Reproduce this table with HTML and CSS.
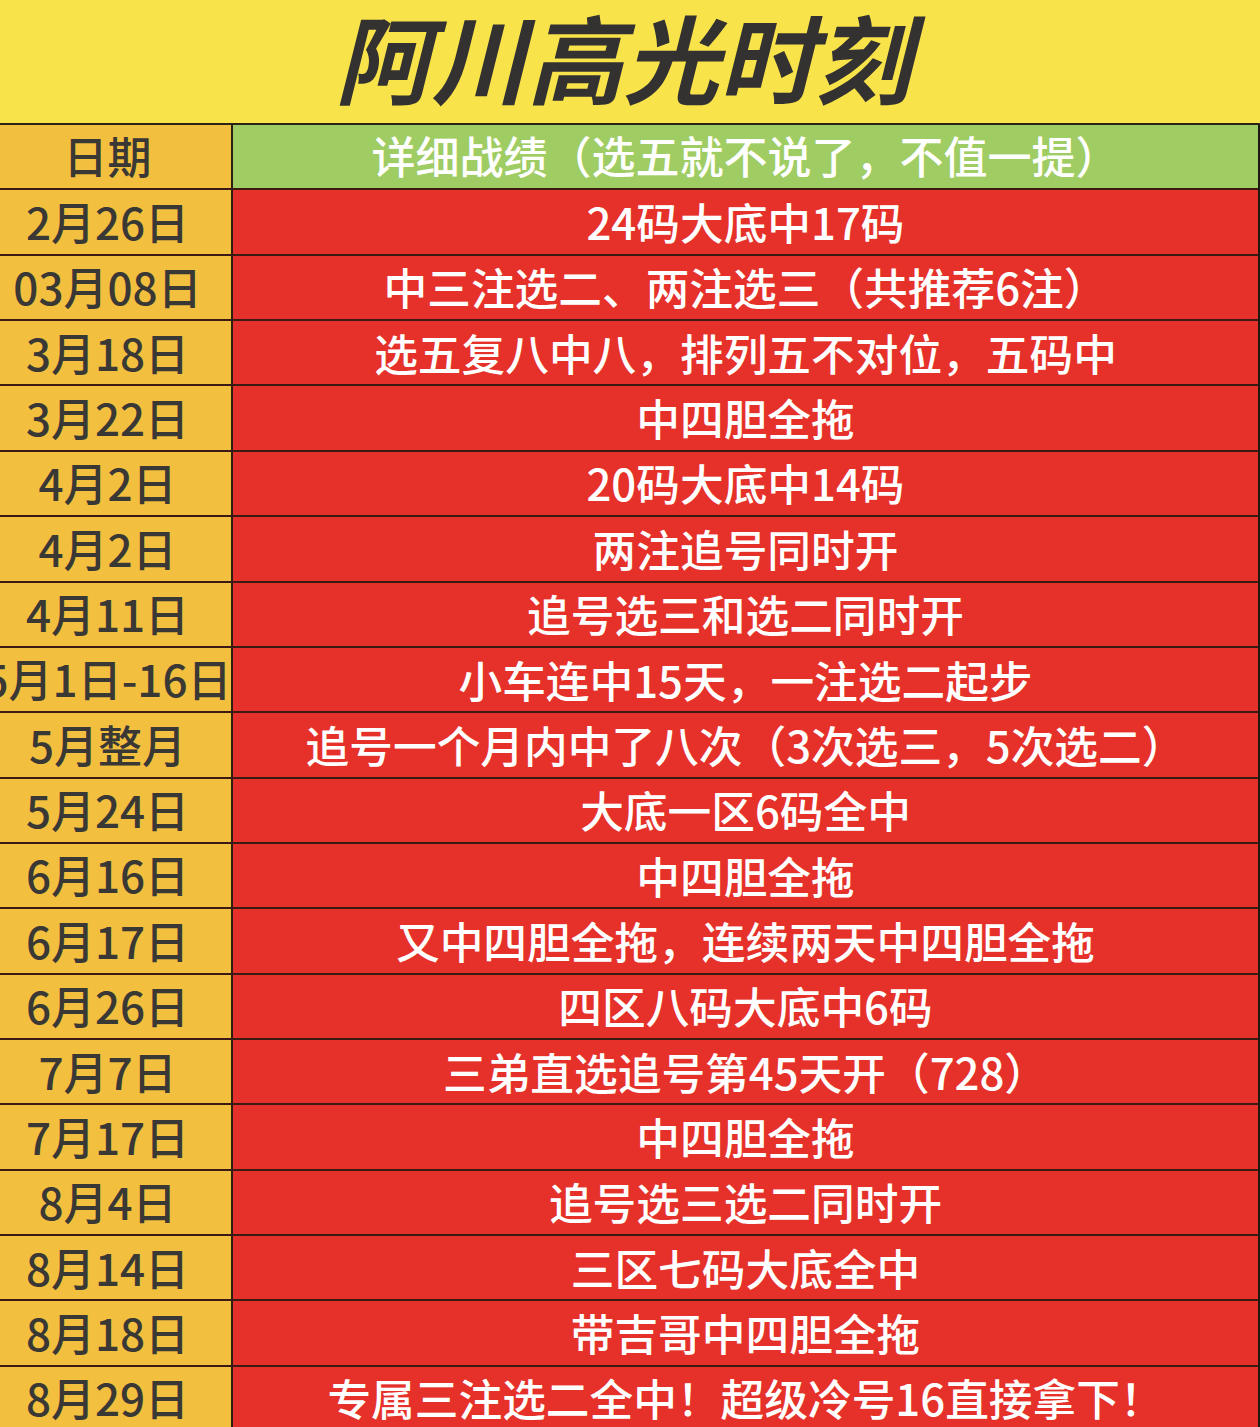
FILE: index.html
```html
<!DOCTYPE html>
<html lang="zh-CN">
<head>
<meta charset="utf-8">
<title>阿川高光时刻</title>
<link rel="stylesheet" href="styles.css">
</head>
<body>
<div class="page">
  <div class="title"><span class="title-text">阿川高光时刻</span></div>
  <div class="table">
    <div class="row head"><div class="date">日期</div><div class="detail">详细战绩（选五就不说了，不值一提）</div></div>
    <div class="row"><div class="date">2月26日</div><div class="detail">24码大底中17码</div></div>
    <div class="row"><div class="date">03月08日</div><div class="detail">中三注选二、两注选三（共推荐6注）</div></div>
    <div class="row"><div class="date">3月18日</div><div class="detail">选五复八中八，排列五不对位，五码中</div></div>
    <div class="row"><div class="date">3月22日</div><div class="detail">中四胆全拖</div></div>
    <div class="row"><div class="date">4月2日</div><div class="detail">20码大底中14码</div></div>
    <div class="row"><div class="date">4月2日</div><div class="detail">两注追号同时开</div></div>
    <div class="row"><div class="date">4月11日</div><div class="detail">追号选三和选二同时开</div></div>
    <div class="row"><div class="date">5月1日-16日</div><div class="detail">小车连中15天，一注选二起步</div></div>
    <div class="row"><div class="date">5月整月</div><div class="detail">追号一个月内中了八次（3次选三，5次选二）</div></div>
    <div class="row"><div class="date">5月24日</div><div class="detail">大底一区6码全中</div></div>
    <div class="row"><div class="date">6月16日</div><div class="detail">中四胆全拖</div></div>
    <div class="row"><div class="date">6月17日</div><div class="detail">又中四胆全拖，连续两天中四胆全拖</div></div>
    <div class="row"><div class="date">6月26日</div><div class="detail">四区八码大底中6码</div></div>
    <div class="row"><div class="date">7月7日</div><div class="detail">三弟直选追号第45天开（728）</div></div>
    <div class="row"><div class="date">7月17日</div><div class="detail">中四胆全拖</div></div>
    <div class="row"><div class="date">8月4日</div><div class="detail">追号选三选二同时开</div></div>
    <div class="row"><div class="date">8月14日</div><div class="detail">三区七码大底全中</div></div>
    <div class="row"><div class="date">8月18日</div><div class="detail">带吉哥中四胆全拖</div></div>
    <div class="row"><div class="date">8月29日</div><div class="detail">专属三注选二全中！超级冷号16直接拿下！</div></div>
  </div>
</div>
</body>
</html>
```

FILE: styles.css
```css
html, body {
  margin: 0;
  padding: 0;
  background: #f9e34b;
}
.page {
  width: 1260px;
  height: 1427px;
  overflow: hidden;
  font-family: "Noto Sans CJK SC", "Noto Sans", sans-serif;
}
.title {
  box-sizing: border-box;
  height: 125px;
  background: #f9e34b;
  border-bottom: 2px solid #2b2416;
  display: flex;
  align-items: center;
  justify-content: center;
  padding: 0 14px 12px 0;
}
.title-text {
  font-size: 96px;
  font-weight: 700;
  font-style: italic;
  color: #333230;
  line-height: 1.1;
  padding: 0 16px;
}
.table {
  display: flex;
  flex-direction: column;
  border-right: 2px solid #1e1a12;
  width: 1258px;
}
.row {
  display: grid;
  grid-template-columns: 233px 1fr;
  height: 65.37px;
  box-sizing: border-box;
  border-bottom: 2px solid #3a1a12;
}
.date {
  background: #f3bf3f;
  color: #3a3835;
  border-right: 2px solid #2a2012;
  display: flex;
  align-items: center;
  justify-content: center;
  font-size: 44px;
  font-weight: 500;
  white-space: nowrap;
  line-height: 1.1;
  padding: 0 16px 2px 0;
}
.detail {
  background: #e5312a;
  color: #ffffff;
  display: flex;
  align-items: center;
  justify-content: center;
  font-size: 43.7px;
  font-weight: 500;
  white-space: nowrap;
  line-height: 1.1;
  padding: 0 0 2px 0;
}
.head .detail {
  background: #a0cc64;
  font-size: 44px;
}
```
